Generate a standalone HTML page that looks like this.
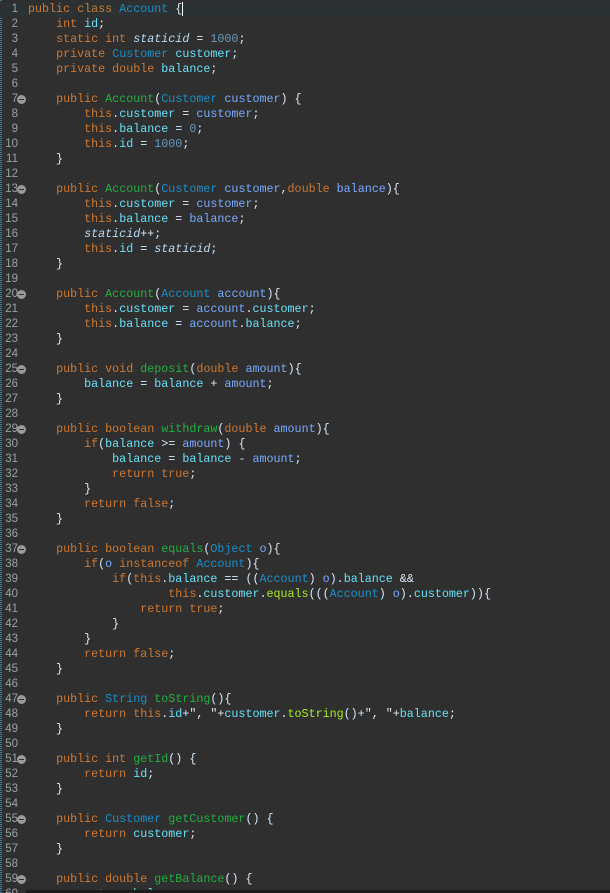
<!DOCTYPE html>
<html><head><meta charset="utf-8"><style>
html,body{margin:0;padding:0;background:#2f2f2f;width:610px;height:893px;overflow:hidden}
#w{position:relative;width:610px;height:893px;overflow:hidden}
#g{position:absolute;left:0;top:0;width:2px;height:893px;background:repeating-linear-gradient(#3a7ea0 0 1px,#2f2f2f 1px 2px)}
.l{position:absolute;left:0;height:15px;width:610px;font:11.7px/15px "Liberation Mono",monospace;color:#d9e8f7;white-space:pre;margin-top:2px}
.n{position:absolute;left:0;width:18px;text-align:right;color:#98a2a8;font:11.5px/15px "Liberation Sans",sans-serif}
.c{position:absolute;left:28px}
.fm{position:absolute;left:17px;top:3px;width:9px;height:9px;border-radius:50%;background:#9a9a9a}
.fm:after{content:"";position:absolute;left:2px;top:4px;width:5px;height:1px;background:#2f2f2f}
.k{color:#cc7832}.t{color:#1b8fc8}.f{color:#66e1f8}.m{color:#20b040}.cl{color:#a7ec21}.nm{color:#6897bb}.p{color:#79abff}.s{color:#b9dcf5;font-style:italic}.w{color:#e8e8e8}
#bot{position:absolute;left:26px;top:890px;width:584px;height:3px;background:#1c1c1c}
</style></head><body><div id="w">
<div id="g"></div>
<div class="l" style="top:0px;background:#2c3134"><span class="n">1</span><span class="c"><span class="k">public class</span> <span class="t">Account</span> {<span style="border-left:1px solid #fff"></span></span></div>
<div class="l" style="top:15px"><span class="n">2</span><span class="c">    <span class="k">int</span> <span class="f">id</span>;</span></div>
<div class="l" style="top:30px"><span class="n">3</span><span class="c">    <span class="k">static int</span> <span class="s">staticid</span> = <span class="nm">1000</span>;</span></div>
<div class="l" style="top:45px"><span class="n">4</span><span class="c">    <span class="k">private</span> <span class="t">Customer</span> <span class="f">customer</span>;</span></div>
<div class="l" style="top:60px"><span class="n">5</span><span class="c">    <span class="k">private double</span> <span class="f">balance</span>;</span></div>
<div class="l" style="top:75px"><span class="n">6</span></div>
<div class="l" style="top:90px"><span class="n">7</span><span class="fm"></span><span class="c">    <span class="k">public</span> <span class="m">Account</span>(<span class="t">Customer</span> <span class="p">customer</span>) {</span></div>
<div class="l" style="top:105px"><span class="n">8</span><span class="c">        <span class="k">this</span>.<span class="f">customer</span> = <span class="p">customer</span>;</span></div>
<div class="l" style="top:120px"><span class="n">9</span><span class="c">        <span class="k">this</span>.<span class="f">balance</span> = <span class="nm">0</span>;</span></div>
<div class="l" style="top:135px"><span class="n">10</span><span class="c">        <span class="k">this</span>.<span class="f">id</span> = <span class="nm">1000</span>;</span></div>
<div class="l" style="top:150px"><span class="n">11</span><span class="c">    }</span></div>
<div class="l" style="top:165px"><span class="n">12</span></div>
<div class="l" style="top:180px"><span class="n">13</span><span class="fm"></span><span class="c">    <span class="k">public</span> <span class="m">Account</span>(<span class="t">Customer</span> <span class="p">customer</span>,<span class="k">double</span> <span class="p">balance</span>){</span></div>
<div class="l" style="top:195px"><span class="n">14</span><span class="c">        <span class="k">this</span>.<span class="f">customer</span> = <span class="p">customer</span>;</span></div>
<div class="l" style="top:210px"><span class="n">15</span><span class="c">        <span class="k">this</span>.<span class="f">balance</span> = <span class="p">balance</span>;</span></div>
<div class="l" style="top:225px"><span class="n">16</span><span class="c">        <span class="s">staticid</span>++;</span></div>
<div class="l" style="top:240px"><span class="n">17</span><span class="c">        <span class="k">this</span>.<span class="f">id</span> = <span class="s">staticid</span>;</span></div>
<div class="l" style="top:255px"><span class="n">18</span><span class="c">    }</span></div>
<div class="l" style="top:270px"><span class="n">19</span></div>
<div class="l" style="top:285px"><span class="n">20</span><span class="fm"></span><span class="c">    <span class="k">public</span> <span class="m">Account</span>(<span class="t">Account</span> <span class="p">account</span>){</span></div>
<div class="l" style="top:300px"><span class="n">21</span><span class="c">        <span class="k">this</span>.<span class="f">customer</span> = <span class="p">account</span>.<span class="f">customer</span>;</span></div>
<div class="l" style="top:315px"><span class="n">22</span><span class="c">        <span class="k">this</span>.<span class="f">balance</span> = <span class="p">account</span>.<span class="f">balance</span>;</span></div>
<div class="l" style="top:330px"><span class="n">23</span><span class="c">    }</span></div>
<div class="l" style="top:345px"><span class="n">24</span></div>
<div class="l" style="top:360px"><span class="n">25</span><span class="fm"></span><span class="c">    <span class="k">public void</span> <span class="m">deposit</span>(<span class="k">double</span> <span class="p">amount</span>){</span></div>
<div class="l" style="top:375px"><span class="n">26</span><span class="c">        <span class="f">balance</span> = <span class="f">balance</span> + <span class="p">amount</span>;</span></div>
<div class="l" style="top:390px"><span class="n">27</span><span class="c">    }</span></div>
<div class="l" style="top:405px"><span class="n">28</span></div>
<div class="l" style="top:420px"><span class="n">29</span><span class="fm"></span><span class="c">    <span class="k">public boolean</span> <span class="m">withdraw</span>(<span class="k">double</span> <span class="p">amount</span>){</span></div>
<div class="l" style="top:435px"><span class="n">30</span><span class="c">        <span class="k">if</span>(<span class="f">balance</span> &gt;= <span class="p">amount</span>) {</span></div>
<div class="l" style="top:450px"><span class="n">31</span><span class="c">            <span class="f">balance</span> = <span class="f">balance</span> - <span class="p">amount</span>;</span></div>
<div class="l" style="top:465px"><span class="n">32</span><span class="c">            <span class="k">return true</span>;</span></div>
<div class="l" style="top:480px"><span class="n">33</span><span class="c">        }</span></div>
<div class="l" style="top:495px"><span class="n">34</span><span class="c">        <span class="k">return false</span>;</span></div>
<div class="l" style="top:510px"><span class="n">35</span><span class="c">    }</span></div>
<div class="l" style="top:525px"><span class="n">36</span></div>
<div class="l" style="top:540px"><span class="n">37</span><span class="fm"></span><span class="c">    <span class="k">public boolean</span> <span class="m">equals</span>(<span class="t">Object</span> <span class="p">o</span>){</span></div>
<div class="l" style="top:555px"><span class="n">38</span><span class="c">        <span class="k">if</span>(<span class="p">o</span> <span class="k">instanceof</span> <span class="t">Account</span>){</span></div>
<div class="l" style="top:570px"><span class="n">39</span><span class="c">            <span class="k">if</span>(<span class="k">this</span>.<span class="f">balance</span> == ((<span class="t">Account</span>) <span class="p">o</span>).<span class="f">balance</span> &amp;&amp;</span></div>
<div class="l" style="top:585px"><span class="n">40</span><span class="c">                    <span class="k">this</span>.<span class="f">customer</span>.<span class="cl">equals</span>(((<span class="t">Account</span>) <span class="p">o</span>).<span class="f">customer</span>)){</span></div>
<div class="l" style="top:600px"><span class="n">41</span><span class="c">                <span class="k">return true</span>;</span></div>
<div class="l" style="top:615px"><span class="n">42</span><span class="c">            }</span></div>
<div class="l" style="top:630px"><span class="n">43</span><span class="c">        }</span></div>
<div class="l" style="top:645px"><span class="n">44</span><span class="c">        <span class="k">return false</span>;</span></div>
<div class="l" style="top:660px"><span class="n">45</span><span class="c">    }</span></div>
<div class="l" style="top:675px"><span class="n">46</span></div>
<div class="l" style="top:690px"><span class="n">47</span><span class="fm"></span><span class="c">    <span class="k">public</span> <span class="t">String</span> <span class="m">toString</span>(){</span></div>
<div class="l" style="top:705px"><span class="n">48</span><span class="c">        <span class="k">return this</span>.<span class="f">id</span>+<span class="w">", "</span>+<span class="f">customer</span>.<span class="cl">toString</span>()+<span class="w">", "</span>+<span class="f">balance</span>;</span></div>
<div class="l" style="top:720px"><span class="n">49</span><span class="c">    }</span></div>
<div class="l" style="top:735px"><span class="n">50</span></div>
<div class="l" style="top:750px"><span class="n">51</span><span class="fm"></span><span class="c">    <span class="k">public int</span> <span class="m">getId</span>() {</span></div>
<div class="l" style="top:765px"><span class="n">52</span><span class="c">        <span class="k">return</span> <span class="f">id</span>;</span></div>
<div class="l" style="top:780px"><span class="n">53</span><span class="c">    }</span></div>
<div class="l" style="top:795px"><span class="n">54</span></div>
<div class="l" style="top:810px"><span class="n">55</span><span class="fm"></span><span class="c">    <span class="k">public</span> <span class="t">Customer</span> <span class="m">getCustomer</span>() {</span></div>
<div class="l" style="top:825px"><span class="n">56</span><span class="c">        <span class="k">return</span> <span class="f">customer</span>;</span></div>
<div class="l" style="top:840px"><span class="n">57</span><span class="c">    }</span></div>
<div class="l" style="top:855px"><span class="n">58</span></div>
<div class="l" style="top:870px"><span class="n">59</span><span class="fm"></span><span class="c">    <span class="k">public double</span> <span class="m">getBalance</span>() {</span></div>
<div class="l" style="top:885px"><span class="n">60</span><span class="c">        <span class="k">return</span> <span class="f">balance</span>;</span></div>
<div id="bot"></div>
</div></body></html>
